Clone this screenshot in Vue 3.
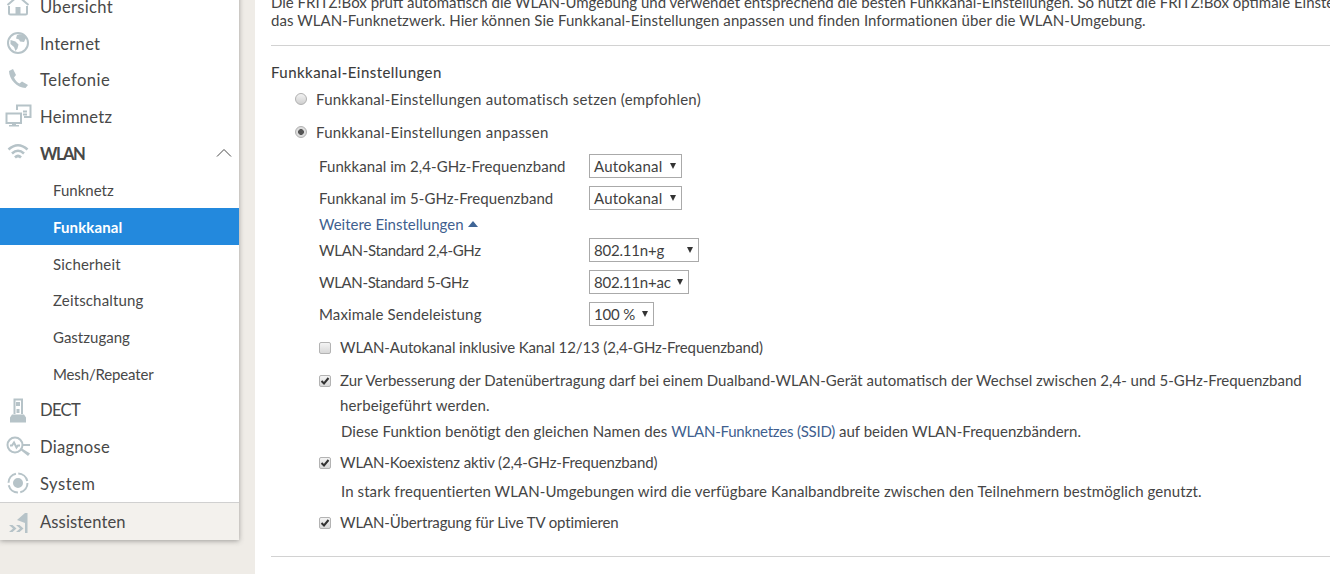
<script setup>
const nav = [
  { label: 'Übersicht', ls: .3, stroke: 'M5 14V21a1.5 1.5 0 0 0 1.5 1.5H21.5A1.5 1.5 0 0 0 23 21V14M3.5 13 14 4 24.5 13', fill: 'M11.5 15h5v8h-5z' },
  { label: 'Internet', ls: .25, stroke: 'M14 4a10 10 0 1 0 0 20a10 10 0 1 0 0-20', fill: 'M13 6c3-1.5 7-.5 9 3l-2 4-4-.5-1-2-3-1zM6.500 11l5 1.500 3 3-1 4-2 2.500-1.500-4-3.500-3z' },
  { label: 'Telefonie', ls: .45, stroke: '', fill: 'M5 5 9 3 12 9 10 11.500C11 14 13 16.500 15.500 17.500L18 15.500 24 19 21.500 22C13 22 5 13 5 5z' },
  { label: 'Heimnetz', ls: .25, stroke: 'M13 8V3.500H26.500V15H20M2.500 11.500H17V21H2.500zM19 9.500h4M19 12.500h4', fill: 'M8 21h4v2h3v1.500H5V23h3z' },
  { label: 'WLAN', ls: -1.5, bold: true, open: true, thick: true, stroke: 'M4.500 10.500Q14 2 23.500 10.500M8 14.500Q14 9 20 14.500M11 18.500Q14 15.500 17 18.500', fill: '' },
  { label: 'Funknetz', sub: true },
  { label: 'Funkkanal', ls: .1, sub: true, active: true },
  { label: 'Sicherheit', ls: .2, sub: true },
  { label: 'Zeitschaltung', ls: .15, sub: true },
  { label: 'Gastzugang', sub: true },
  { label: 'Mesh/Repeater', ls: -.15, sub: true },
  { label: 'DECT', ls: -.7, stroke: 'M10.500 18V3.500H18V18M12.500 7h3M12.500 14h3M12.500 16h3', fill: 'M8 18.500h12l2 3v5H6v-5zM12 6h4v4h-4z' },
  { label: 'Diagnose', ls: .25, stroke: 'M11 4.500a7.500 7.500 0 1 0 0 15a7.500 7.500 0 1 0 0-15M6 12.500h2l2-3 2.500 5 1.500-2h2M19 12H26', fill: 'M16.500 17 18 15.500 26 20.500 24 23z' },
  { label: 'System', ls: .5, ring: true, stroke: '', fill: 'M14 9a5 5 0 1 0 0 10a5 5 0 1 0 0-10' }
]
const helper = { label: 'Assistenten', ls: .1, fill: 'M21 6h2.500V26H21zM21 6 13 13l8 3zM5 18l4 3.500-4 3.500h3.500l4-3.500-4-3.500zM12 18l4 3.500-4 3.500h3.500l4-3.500-4-3.500z' }
const topSelects = [
  { label: 'Funkkanal im 2,4-GHz-Frequenzband', ls: .06, value: 'Autokanal', vs: .2, width: '93px' },
  { label: 'Funkkanal im 5-GHz-Frequenzband', ls: .06, value: 'Autokanal', vs: .2, width: '93px' }
]
const moreSelects = [
  { label: 'WLAN-Standard 2,4-GHz', ls: -.3, value: '802.11n+g', vs: -.2, width: '110px' },
  { label: 'WLAN-Standard 5-GHz', ls: -.35, value: '802.11n+ac', vs: -.2, width: '100px' },
  { label: 'Maximale Sendeleistung', ls: .14, value: '100 %', vs: -.2, width: '65px' }
]
const px = (v) => (v ? { letterSpacing: v + 'px' } : null)
</script>

<template>
  <div class="page">
    <aside class="side">
      <a v-for="item in nav" :key="item.label" class="row" :class="{ sub: item.sub, active: item.active, bold: item.bold }">
        <svg v-if="!item.sub" class="icon" viewBox="0 0 28 28" width="28" height="28">
          <circle v-if="item.ring" cx="14" cy="14" r="9.500" class="ring" />
          <path v-if="item.stroke" :d="item.stroke" class="ln" :class="{ thick: item.thick }" />
          <path v-if="item.fill" :d="item.fill" class="fl" />
        </svg>
        <span :style="px(item.ls)">{{ item.label }}</span>
        <svg v-if="item.open" class="chev" viewBox="0 0 16 10" width="16" height="10"><path d="M1 8.500 8 1.500l7 7" /></svg>
      </a>
      <a class="row helper">
        <svg class="icon" viewBox="0 0 28 28" width="28" height="28"><path :d="helper.fill" class="fl" /></svg>
        <span :style="px(helper.ls)">{{ helper.label }}</span>
      </a>
    </aside>

    <main class="main">
      <p class="intro">Die FRITZ!Box prüft automatisch die WLAN-Umgebung und verwendet entsprechend die besten Funkkanal-Einstellungen. So nutzt die FRITZ!Box optimale Einstellungen für<br /><span class="l2">das WLAN-Funknetzwerk. Hier können Sie Funkkanal-Einstellungen anpassen und finden Informationen über die WLAN-Umgebung.</span></p>
      <hr class="rule" />
      <h2 class="title">Funkkanal-Einstellungen</h2>

      <label class="radio first"><input type="radio" name="mode" /><span>Funkkanal-Einstellungen automatisch setzen (empfohlen)</span></label>
      <label class="radio second"><input type="radio" name="mode" checked /><span>Funkkanal-Einstellungen anpassen</span></label>

      <div class="form">
        <div v-for="s in topSelects" :key="s.label" class="field">
          <span :style="px(s.ls)">{{ s.label }}</span>
          <div class="select" :style="{ width: s.width, letterSpacing: s.vs + 'px' }">{{ s.value }}</div>
        </div>
        <a class="more">Weitere Einstellungen <i class="tri"></i></a>
        <div v-for="s in moreSelects" :key="s.label" class="field">
          <span :style="px(s.ls)">{{ s.label }}</span>
          <div class="select" :style="{ width: s.width, letterSpacing: s.vs + 'px' }">{{ s.value }}</div>
        </div>
      </div>

      <div class="checks">
        <label class="check c1"><input type="checkbox" /><span>WLAN-Autokanal inklusive Kanal 12/13 (2,4-GHz-Frequenzband)</span></label>
        <label class="check c2"><input type="checkbox" checked /><span>Zur Verbesserung der Datenübertragung darf bei einem Dualband-WLAN-Gerät automatisch der Wechsel zwischen 2,4- und 5-GHz-Frequenzband<br /><span class="herbei">herbeigeführt werden.</span></span></label>
        <p class="hint h1"><span class="pre">Diese Funktion benötigt den gleichen Namen des </span><a>WLAN-Funknetzes (SSID)</a> auf beiden WLAN-Frequenzbändern.</p>
        <label class="check c3"><input type="checkbox" checked /><span>WLAN-Koexistenz aktiv (2,4-GHz-Frequenzband)</span></label>
        <p class="hint h2">In stark frequentierten WLAN-Umgebungen wird die verfügbare Kanalbandbreite zwischen den Teilnehmern bestmöglich genutzt.</p>
        <label class="check c4"><input type="checkbox" checked /><span>WLAN-Übertragung für Live TV optimieren</span></label>
      </div>
      <hr class="rule end" />
    </main>
  </div>
</template>

<style>
html, body { margin: 0; overflow: hidden; background: #efece7; }
</style>

<style scoped>
.page {
  display: flex;
  width: 1330px;
  height: 574px;
  overflow: hidden;
  background: #efece7;
  font-family: Lato, sans-serif;
  color: #454545;
}
.side {
  flex: 0 0 239px;
  align-self: flex-start;
  margin-top: -12px;
  background: #fff;
  box-shadow: 0 1px 5px rgba(60, 60, 60, .45);
}
.row {
  display: flex;
  align-items: center;
  height: 36.7px;
  padding: 1px 0 0 4px;
  font-size: 16.6px;
  color: #484848;
  box-sizing: border-box;
}
.row > svg { margin-top: -1px; }
.icon { flex: none; margin-right: 8px; }
.ln { fill: none; stroke: #b6c3c8; stroke-width: 2; }
.ln.thick { stroke-width: 2.600; }
.fl { fill: #b6c3c8; }
.ring { fill: none; stroke: #b6c3c8; stroke-width: 2; stroke-dasharray: 12.500 2.420; }
.bold { font-weight: 700; }
.chev { margin-left: auto; margin-right: 7px; }
.chev path { fill: none; stroke: #4a4a4a; stroke-width: 1; }
.sub { padding-left: 53px; font-size: 15px; }
.active { background: #2389dd; color: #fff; font-weight: 700; }
.helper { height: 38px; background: #f3f1ed; border-top: 1px solid #d0d0d0; }

.main {
  flex: 1;
  margin-left: 16px;
  background: #fff;
  padding: 0 0 0 16px;
  font-size: 15px;
  color: #454545;
  min-width: 0;
  overflow: hidden;
}
.intro {
  margin: -7px 0 0;
  line-height: 18px;
  white-space: nowrap;
}
.l2 { letter-spacing: .05px; }
.rule { border: 0; border-top: 1px solid #d2d2d2; margin: 16px 0 0; }
.title { margin: 16px 0 0; font-size: 15px; line-height: 20px; font-weight: 400; color: #3a3a3a; letter-spacing: .45px; -webkit-text-stroke: .1px #3a3a3a; }
.radio { display: flex; align-items: center; height: 20px; padding-left: 24px; }
.radio span { letter-spacing: .23px; }
.radio.first { margin-top: 6.500px; }
.radio.second { margin-top: 13.500px; }
.radio input, .check input { appearance: none; margin: 0; flex: none; width: 12px; height: 12px; box-sizing: border-box; }
.radio input {
  margin-right: 9px;
  border-radius: 50%;
  border: 1px solid #b0b0b0;
  background: linear-gradient(#f2f2f2, #cfcfcf);
}
.radio input:checked { background: radial-gradient(circle, #555 0 2.600px, #dcdcdc 3.200px); }
.form { padding-left: 48px; margin-top: 12px; }
.field { display: flex; align-items: center; height: 24px; margin-bottom: 8px; }
.field > span { flex: 0 0 270px; }
.select {
  box-sizing: border-box;
  position: relative;
  height: 24px;
  line-height: 22px;
  padding-left: 4px;
  border: 1px solid #aaa;
  background: #fff;
  color: #3f3f3f;
}
.select::after {
  content: "";
  position: absolute;
  right: 5px;
  top: 8px;
  border-left: 3.500px solid transparent;
  border-right: 3.500px solid transparent;
  border-top: 6px solid #333;
}
.more { display: flex; align-items: center; height: 18px; color: #3f5f8f; margin: -3px 0 5px; }
.tri {
  margin-left: 4px;
  border-left: 5px solid transparent;
  border-right: 5px solid transparent;
  border-bottom: 6px solid #3f6596;
}
.checks { padding-left: 48px; margin-top: 8.500px; }
.check { display: flex; align-items: flex-start; line-height: 25px; }
.check input {
  margin: 7px 9px 0 0;
  border: 1px solid #b3b3b3;
  border-radius: 2px;
  background: linear-gradient(#f4f4f4, #d8d8d8);
}
.check input:checked {
  background:
    url("data:image/svg+xml,%3Csvg xmlns='http://www.w3.org/2000/svg' viewBox='0 0 12 12'%3E%3Cpath d='M2.500 6 5 8.500 9.500 3' fill='none' stroke='%23333' stroke-width='2'/%3E%3C/svg%3E") center / 12px no-repeat,
    linear-gradient(#f4f4f4, #d8d8d8);
}
.c1 span { letter-spacing: -.12px; }
.c2 { margin-top: 8px; }
.herbei { letter-spacing: .15px; }
.c3 { margin-top: 6px; }
.c3 > span { letter-spacing: -.14px; }
.c4 { margin-top: 6px; }
.c4 > span { letter-spacing: -.13px; }
.hint { margin: 0; padding-left: 22px; line-height: 25px; }
.hint a { color: #3f5f8f; letter-spacing: -.22px; }
.pre { letter-spacing: .07px; }
.h1 { margin-top: 1px; }
.h2 { margin-top: 4px; letter-spacing: .09px; }
.end { margin-top: 21.500px; }
</style>
